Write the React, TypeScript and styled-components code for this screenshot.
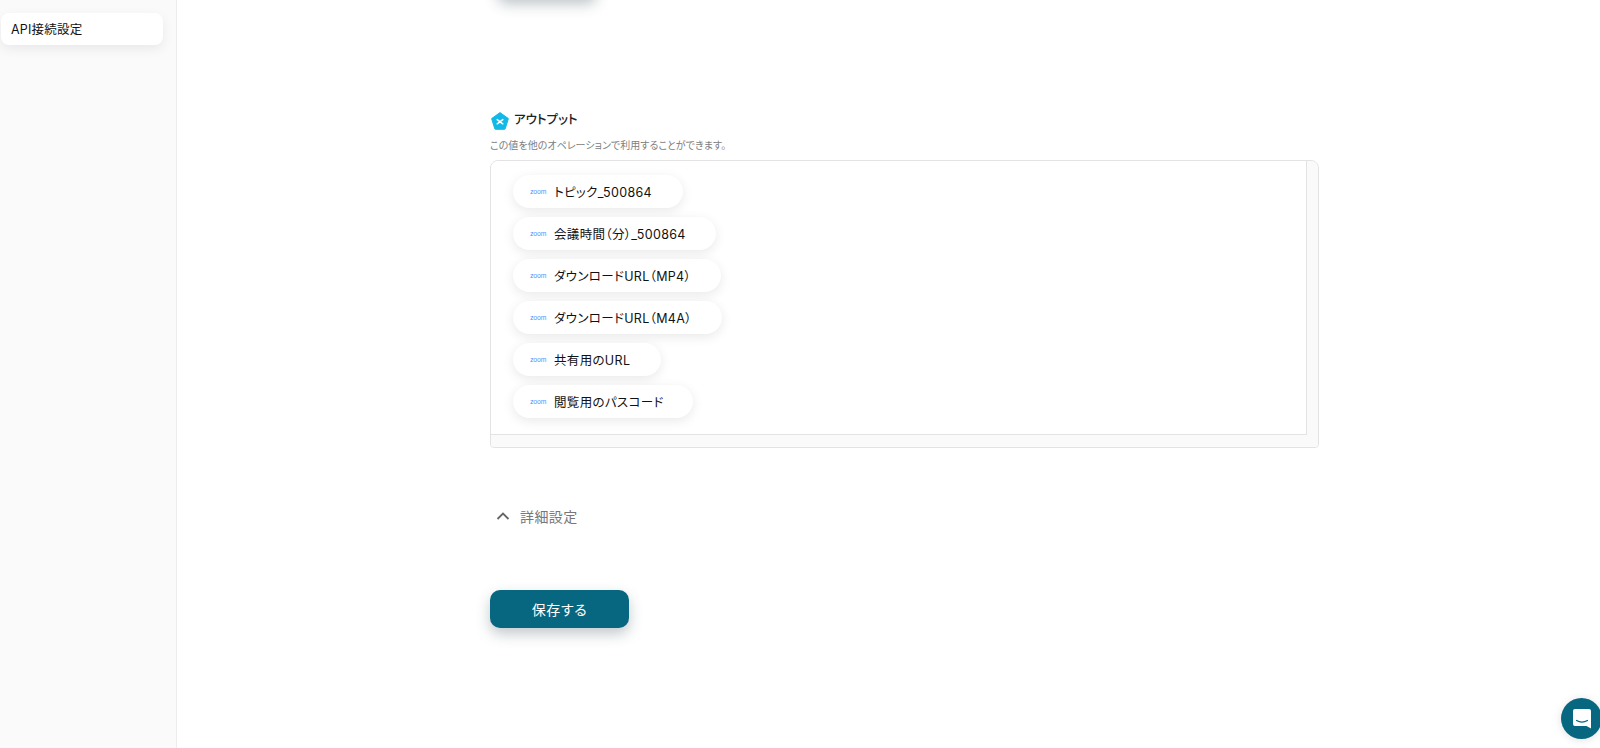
import React from "react";
import styled, { createGlobalStyle } from "styled-components";

const Global = createGlobalStyle`
  html, body { margin: 0; padding: 0; height: 100%; overflow: hidden; background: #fff; }
  body { font-family: Inter, "Noto Sans CJK JP", sans-serif; color: #222; font-feature-settings: "palt"; }
  #root { height: 748px; }
`;

const Page = styled.div`
  display: flex;
  width: 1600px;
  height: 748px;
  overflow: hidden;
`;

const Sidebar = styled.aside`
  flex: none;
  box-sizing: border-box;
  width: 177px;
  padding: 13px 13px 0 1px;
  background: #fafafa;
  border-right: 1px solid #ececec;
`;

const NavItem = styled.div`
  display: flex;
  align-items: center;
  height: 32px;
  padding-left: 10px;
  padding-bottom: 1px;
  box-sizing: border-box;
  background: #fff;
  border-radius: 8px;
  font-size: 12.5px;
  font-weight: 400;
  letter-spacing: 0.2px;
  color: #111;
  box-shadow: 0 4px 12px rgba(0, 0, 0, 0.07);
`;

const Main = styled.main`
  flex: 1;
  min-width: 0;
  padding-left: 313px;
`;

const Column = styled.div`
  width: 829px;
`;

const ClippedButton = styled.div`
  width: 100px;
  height: 38px;
  margin: -38px 0 0 7px;
  border-radius: 10px;
  background: #086780;
  box-shadow: 0 4px 14px rgba(40, 60, 70, 0.3);
`;

const TitleRow = styled.div`
  display: flex;
  align-items: center;
  gap: 5px;
  height: 20px;
  margin: 111px 0 0 1px;
`;

const Title = styled.h2`
  margin: 0 0 2px;
  font-size: 12.5px;
  font-weight: 500;
  color: #222;
  line-height: 16px;
`;

const Hint = styled.p`
  margin: 7px 0 0;
  height: 22px;
  font-size: 10px;
  line-height: 15px;
  color: #808080;
  letter-spacing: 0.03px;
`;

const OutputBox = styled.div`
  box-sizing: border-box;
  display: grid;
  grid-template-columns: 1fr 11px;
  grid-template-rows: 1fr 12px;
  height: 288px;
  border: 1px solid #e3e3e3;
  border-radius: 8px 8px 4px 4px;
  background: #fafafa;
  overflow: hidden;
`;

const ScrollArea = styled.div`
  display: flex;
  flex-direction: column;
  align-items: flex-start;
  gap: 9px;
  padding: 14px 0 0 22px;
  background: #fff;
  border-right: 1px solid #e3e3e3;
  border-bottom: 1px solid #e3e3e3;
`;

const TrackV = styled.div`
  grid-row: 1 / 3;
  grid-column: 2;
  background: #fafafa;
`;

const TrackH = styled.div`
  grid-row: 2;
  grid-column: 1;
  background: #fafafa;
`;

const Pill = styled.div<{ $w: number }>`
  display: flex;
  align-items: center;
  box-sizing: border-box;
  width: ${(p) => p.$w}px;
  height: 33px;
  padding-left: 17px;
  background: #fff;
  border-radius: 17px;
  box-shadow: 0 3px 12px rgba(0, 0, 0, 0.09);
`;

const ZoomMark = styled.span`
  width: 16px;
  margin-right: 8px;
  font-size: 6.5px;
  line-height: 10px;
  letter-spacing: -0.15px;
  color: #4a94ff;
`;

const PillLabel = styled.span`
  font-size: 12.5px;
  font-weight: 400;
  letter-spacing: 0.33px;
  color: #111;
  white-space: nowrap;
`;

const Details = styled.div`
  display: flex;
  align-items: center;
  gap: 9px;
  height: 24px;
  margin: 56px 0 0 5px;
  font-size: 14px;
  letter-spacing: 0.4px;
  color: #777;
`;

const SaveButton = styled.button`
  display: block;
  width: 139px;
  height: 38px;
  margin-top: 62px;
  border: 0;
  border-radius: 10px;
  background: #086780;
  color: #fff;
  font: inherit;
  font-size: 14px;
  letter-spacing: 0.6px;
  box-shadow: 0 6px 14px rgba(40, 60, 70, 0.28);
`;

const ChatBubble = styled.div`
  position: fixed;
  left: 1561px;
  top: 698px;
  width: 41px;
  height: 41px;
  display: flex;
  align-items: center;
  justify-content: center;
  border-radius: 50%;
  background: #086780;
  box-shadow: 0 1px 8px rgba(0, 0, 0, 0.12);
`;

const items = [
  { label: "トピック_500864", w: 170 },
  { label: "会議時間（分）_500864", w: 203 },
  { label: "ダウンロードURL（MP4）", w: 208 },
  { label: "ダウンロードURL（M4A）", w: 209 },
  { label: "共有用のURL", w: 148 },
  { label: "閲覧用のパスコード", w: 180 },
];

export default function App() {
  return (
    <Page>
      <Global />
      <Sidebar>
        <NavItem>API接続設定</NavItem>
      </Sidebar>
      <Main>
        <Column>
          <ClippedButton />
          <TitleRow>
            <svg width="18" height="18" viewBox="0 0 18 18" aria-hidden="true">
              <path
                d="M9 .6 17.4 6.6 14.3 16.6a1 1 0 0 1-1 .7H4.7a1 1 0 0 1-1-.7L.6 6.6Z"
                fill="#13b9e6"
                stroke="#13b9e6"
                strokeLinejoin="round"
              />
              <path d="M6.2 7.6 11.8 11.8M11.8 7.6 6.2 11.8" stroke="#fff" strokeWidth="1.5" strokeLinecap="round" />
            </svg>
            <Title>アウトプット</Title>
          </TitleRow>
          <Hint>この値を他のオペレーションで利用することができます。</Hint>
          <OutputBox>
            <ScrollArea>
              {items.map((item) => (
                <Pill key={item.label} $w={item.w}>
                  <ZoomMark>zoom</ZoomMark>
                  <PillLabel>{item.label}</PillLabel>
                </Pill>
              ))}
            </ScrollArea>
            <TrackV />
            <TrackH />
          </OutputBox>
          <Details>
            <svg width="16" height="16" viewBox="0 0 16 16" fill="none" aria-hidden="true">
              <path d="M2.5 11 8 5.5 13.5 11" stroke="#666" strokeWidth="1.8" />
            </svg>
            詳細設定
          </Details>
          <SaveButton>保存する</SaveButton>
        </Column>
      </Main>
      <ChatBubble>
        <svg width="20" height="22" viewBox="0 0 20 22" aria-hidden="true">
          <path
            d="M3 1h14a2 2 0 0 1 2 2v17.5L14.5 18H3a2 2 0 0 1-2-2V3a2 2 0 0 1 2-2Z"
            fill="#fff"
          />
          <path d="M4.5 12.5c3.5 2 7.5 2 11 0" fill="none" stroke="#086780" strokeWidth="1.2" strokeLinecap="round" />
        </svg>
      </ChatBubble>
    </Page>
  );
}
